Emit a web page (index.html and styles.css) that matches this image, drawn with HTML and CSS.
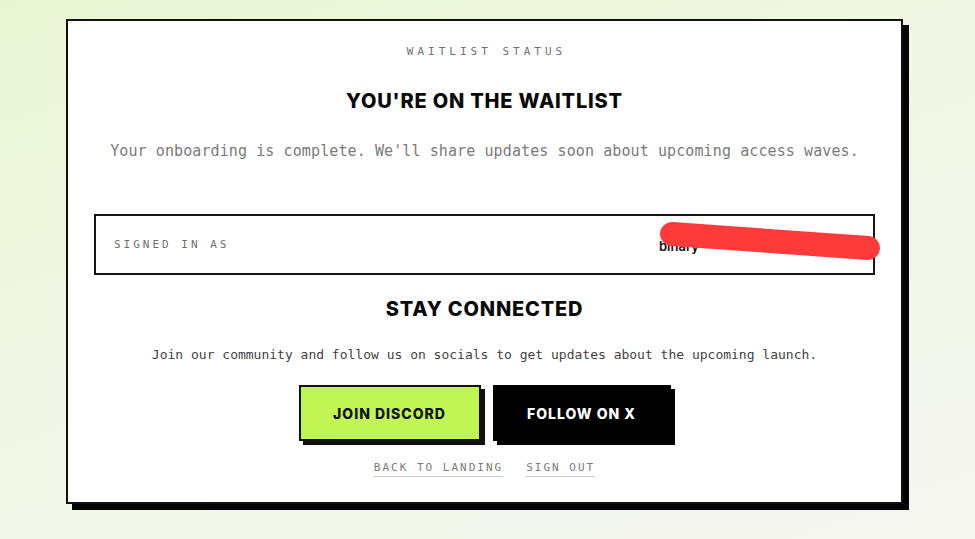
FILE: index.html
```html
<!DOCTYPE html>
<html lang="en">

<head>
    <meta charset="UTF-8">
    <meta name="viewport" content="width=device-width, initial-scale=1.0">
    <title>Waitlist Status</title>
    <link rel="stylesheet" href="styles.css">
</head>

<body>
    <div class="page">
        <div class="card">
            <div class="eyebrow">WAITLIST STATUS</div>
            <h1 class="title">YOU'RE ON THE WAITLIST</h1>
            <p class="lead">Your onboarding is complete. We'll share updates soon about upcoming access waves.</p>

            <div class="account">
                <span class="account-label">SIGNED IN AS</span>
                <span class="account-value">binary</span>
                <!-- redaction stroke over the email -->
                <svg class="scribble" width="230" height="44" viewBox="0 0 230 44">
                    <line x1="12" y1="14" x2="208" y2="28" stroke="#ff3a3a" stroke-width="24" stroke-linecap="round" />
                </svg>
            </div>

            <h2 class="subtitle">STAY CONNECTED</h2>
            <p class="note">Join our community and follow us on socials to get updates about the upcoming launch.</p>

            <div class="actions">
                <a href="#" class="btn btn-discord">JOIN DISCORD</a>
                <a href="#" class="btn btn-x">FOLLOW ON X</a>
            </div>

            <div class="links">
                <a href="#" class="text-link">BACK TO LANDING</a>
                <a href="#" class="text-link">SIGN OUT</a>
            </div>
        </div>
    </div>
</body>

</html>
```

FILE: styles.css
```css
html,
body {
    height: 100%;
}

body {
    margin: 0;
    font-family: 'Inter', 'Liberation Sans', sans-serif;
    background: linear-gradient(160deg, #e9f5d2 0%, #f1f7e6 45%, #f6f7f1 100%);
    color: #0a0a0a;
}

.page {
    padding: 19px 0 0 66px;
}

.card {
    width: 837px;
    box-sizing: border-box;
    background: #ffffff;
    border: 2px solid #111111;
    box-shadow: 6px 6px 0 #050505;
    padding: 23px 26px 25px;
    display: flex;
    flex-direction: column;
    align-items: center;
    text-align: center;
}

.eyebrow {
    font-family: 'DejaVu Sans Mono', 'Liberation Mono', monospace;
    font-size: 11px;
    line-height: 16px;
    letter-spacing: 4px;
    color: #6f6f6f;
    /* trailing letter-spacing */
    margin-right: -4px;
}

.title {
    margin: 28px 0 0;
    font-size: 20px;
    line-height: 26px;
    font-weight: 800;
    letter-spacing: 0.8px;
}

.lead {
    margin: 26px 0 0;
    font-family: 'DejaVu Sans Mono', 'Liberation Mono', monospace;
    font-size: 15px;
    line-height: 22px;
    letter-spacing: 0.1px;
    color: #7a7a7a;
}

.account {
    position: relative;
    align-self: stretch;
    margin-top: 52px;
    height: 61px;
    box-sizing: border-box;
    border: 2px solid #151515;
    padding: 0 20px 0 18px;
    display: flex;
    align-items: center;
}

.account-label {
    flex: 1;
    text-align: left;
    font-family: 'DejaVu Sans Mono', 'Liberation Mono', monospace;
    font-size: 11px;
    letter-spacing: 3px;
    color: #6f6f6f;
}

.account-value {
    width: 194px;
    text-align: left;
    font-size: 13px;
    font-weight: 600;
    color: #111111;
    padding-top: 3px;
}

.scribble {
    position: absolute;
    left: 564px;
    top: 4px;
}

.subtitle {
    margin: 21px 0 0;
    font-size: 20px;
    line-height: 26px;
    font-weight: 800;
    letter-spacing: 0.8px;
}

.note {
    margin: 23px 0 0;
    font-family: 'DejaVu Sans Mono', 'Liberation Mono', monospace;
    font-size: 13px;
    line-height: 20px;
    color: #3f3f3f;
}

.actions {
    margin-top: 20px;
    display: flex;
    gap: 12px;
}

.btn {
    display: flex;
    align-items: center;
    justify-content: center;
    height: 56px;
    box-sizing: border-box;
    border: 2px solid #111111;
    box-shadow: 4px 4px 0 #111111;
    font-size: 14px;
    font-weight: 800;
    letter-spacing: 1px;
    text-decoration: none;
}

.btn-discord {
    width: 182px;
    background: #c1f553;
    color: #111111;
}

.btn-x {
    width: 178px;
    background: #000000;
    border-color: #000000;
    box-shadow: 4px 4px 0 #000000;
    color: #ffffff;
}

.links {
    margin-top: 19px;
    display: flex;
    gap: 23px;
}

.text-link {
    font-family: 'DejaVu Sans Mono', 'Liberation Mono', monospace;
    font-size: 11px;
    line-height: 16px;
    letter-spacing: 2px;
    color: #7a7a7a;
    text-decoration: none;
    border-bottom: 1px solid #c9c9c9;
}
```
